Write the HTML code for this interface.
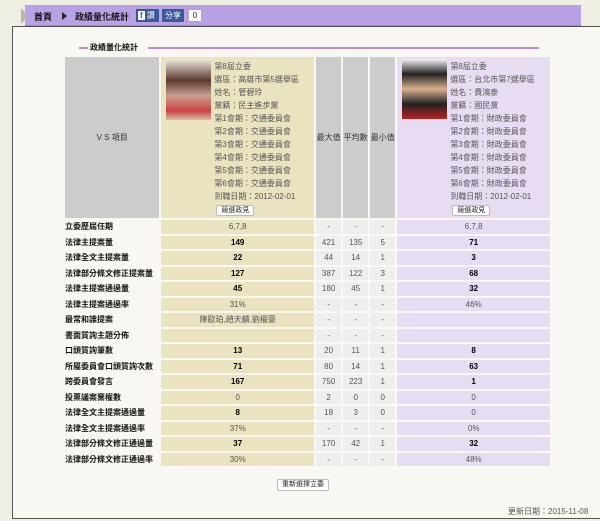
<!DOCTYPE html><html><head><meta charset="utf-8"><style>
*{margin:0;padding:0;box-sizing:border-box}
body{width:600px;height:521px;background:#efeee3;font-family:"Liberation Sans","Noto Sans CJK TC",sans-serif;font-size:8px;color:#222;position:relative;overflow:hidden}
.abs{position:absolute}
#bar{left:25px;top:5px;width:556px;height:21px;background:#b9a1e6;border-bottom:1px solid #9a85c8}
#box{left:12px;top:26px;width:600px;height:493px;background:#f8f7f1;border:1px solid #555}
.bc{font-weight:bold;font-size:9px;color:#111;top:10px}
table{position:absolute;left:63px;top:55px;border-collapse:separate;border-spacing:2px 2px;width:489px}
td{height:13.5px;text-align:center;font-size:8px;color:#555;padding:0}
td.l{text-align:left;font-weight:bold;color:#111;background:#f8f7f1;width:94px}
td.a{background:#e9e3c0;width:152px}
td.b{background:#e8dcf2;width:152px}
td.m{background:#eeeeec;width:25px;color:#555}
b{color:#000}
.hd td{height:161px;vertical-align:middle}
.info{position:absolute;left:53px;top:3px;text-align:left;line-height:13px;color:#555;font-size:8px}
.btn{display:inline-block;background:#fff;border:1px solid #bbb;border-radius:2px;font-size:7px;padding:0 4px;line-height:9px;color:#222;margin-left:2px}
</style></head><body>
<div id="bar" class="abs"></div>
<div class="abs" style="left:21px;top:8px;width:0;height:0;border-left:8px solid #b8b8b0;border-top:8px solid transparent;border-bottom:8px solid transparent"></div>
<div class="abs bc" style="left:34px;top:10px">首頁</div>
<div class="abs" style="left:62px;top:12px;border-left:5px solid #222;border-top:4px solid transparent;border-bottom:4px solid transparent"></div>
<div class="abs bc" style="left:75px;top:10px">政績量化統計</div>
<div class="abs" style="left:136px;top:9px;width:23px;height:13px;background:#3b5998;color:#fff;font-size:8px;line-height:13px;padding-left:2px"><span style="background:#fff;color:#3b5998;font-weight:bold;padding:0 2px">f</span> 讚</div>
<div class="abs" style="left:162px;top:9px;width:22px;height:13px;background:#3b5998;color:#fff;font-size:8px;line-height:13px;text-align:center">分享</div>
<div class="abs" style="left:188px;top:9px;width:14px;height:13px;background:#fff;border:1px solid #aaa;font-size:8px;line-height:11px;text-align:center">0</div>
<div id="box" class="abs"></div>
<div class="abs" style="left:79px;top:47px;width:9px;height:2px;background:#b98ed0"></div>
<div class="abs" style="left:90px;top:42px;font-weight:bold;font-size:8px;color:#111">政績量化統計</div>
<div class="abs" style="left:148px;top:47px;width:391px;height:2px;background:#b98ed0"></div>
<table>
<tr class="hd"><td style="background:#cccccc;color:#333;width:94px">V S 項目</td>
<td class="a" style="position:relative"><div class="abs" style="left:5px;top:2px;width:45px;height:61px;background:linear-gradient(#efe9e0 0,#5a3a30 35%,#c9a090 60%,#c44 85%,#d8c0a8 100%)"></div><div class="info">第8屆立委<br>選區：高雄市第5選舉區<br>姓名：管碧玲<br>黨籍：民主進步黨<br>第1會期：交通委員會<br>第2會期：交通委員會<br>第3會期：交通委員會<br>第4會期：交通委員會<br>第5會期：交通委員會<br>第6會期：交通委員會<br>到職日期：2012-02-01<br><span class="btn">競選政見</span></div></td>
<td style="background:#cccccc;color:#333;width:25px">最大值</td><td style="background:#cccccc;color:#333;width:25px">平均數</td><td style="background:#cccccc;color:#333;width:25px">最小值</td>
<td class="b" style="position:relative"><div class="abs" style="left:5px;top:2px;width:45px;height:60px;background:linear-gradient(#f4f4f4 0,#222 25%,#d8b090 50%,#222 75%,#b22 100%)"></div><div class="info">第8屆立委<br>選區：台北市第7選舉區<br>姓名：費鴻泰<br>黨籍：國民黨<br>第1會期：財政委員會<br>第2會期：財政委員會<br>第3會期：財政委員會<br>第4會期：財政委員會<br>第5會期：財政委員會<br>第6會期：財政委員會<br>到職日期：2012-02-01<br><span class="btn">競選政見</span></div></td></tr>
<tr><td class="l">立委歷屆任期</td><td class="a">6,7,8</td><td class="m">-</td><td class="m">-</td><td class="m">-</td><td class="b">6,7,8</td></tr>
<tr><td class="l">法律主提案量</td><td class="a"><b>149</b></td><td class="m">421</td><td class="m">135</td><td class="m">5</td><td class="b"><b>71</b></td></tr>
<tr><td class="l">法律全文主提案量</td><td class="a"><b>22</b></td><td class="m">44</td><td class="m">14</td><td class="m">1</td><td class="b"><b>3</b></td></tr>
<tr><td class="l">法律部分條文修正提案量</td><td class="a"><b>127</b></td><td class="m">387</td><td class="m">122</td><td class="m">3</td><td class="b"><b>68</b></td></tr>
<tr><td class="l">法律主提案通過量</td><td class="a"><b>45</b></td><td class="m">180</td><td class="m">45</td><td class="m">1</td><td class="b"><b>32</b></td></tr>
<tr><td class="l">法律主提案通過率</td><td class="a">31%</td><td class="m">-</td><td class="m">-</td><td class="m">-</td><td class="b">46%</td></tr>
<tr><td class="l">最常和誰提案</td><td class="a">陳歐珀,趙天麟,劉櫂豪</td><td class="m">-</td><td class="m">-</td><td class="m">-</td><td class="b"></td></tr>
<tr><td class="l">書面質詢主題分佈</td><td class="a"></td><td class="m">-</td><td class="m">-</td><td class="m">-</td><td class="b"></td></tr>
<tr><td class="l">口頭質詢筆數</td><td class="a"><b>13</b></td><td class="m">20</td><td class="m">11</td><td class="m">1</td><td class="b"><b>8</b></td></tr>
<tr><td class="l">所屬委員會口頭質詢次數</td><td class="a"><b>71</b></td><td class="m">80</td><td class="m">14</td><td class="m">1</td><td class="b"><b>63</b></td></tr>
<tr><td class="l">跨委員會發言</td><td class="a"><b>167</b></td><td class="m">750</td><td class="m">223</td><td class="m">1</td><td class="b"><b>1</b></td></tr>
<tr><td class="l">投票議案棄權數</td><td class="a">0</td><td class="m">2</td><td class="m">0</td><td class="m">0</td><td class="b">0</td></tr>
<tr><td class="l">法律全文主提案通過量</td><td class="a"><b>8</b></td><td class="m">18</td><td class="m">3</td><td class="m">0</td><td class="b">0</td></tr>
<tr><td class="l">法律全文主提案通過率</td><td class="a">37%</td><td class="m">-</td><td class="m">-</td><td class="m">-</td><td class="b">0%</td></tr>
<tr><td class="l">法律部分條文修正通過量</td><td class="a"><b>37</b></td><td class="m">170</td><td class="m">42</td><td class="m">1</td><td class="b"><b>32</b></td></tr>
<tr><td class="l">法律部分條文修正通過率</td><td class="a">30%</td><td class="m">-</td><td class="m">-</td><td class="m">-</td><td class="b">48%</td></tr>
</table>
<div class="abs" style="left:277px;top:479px;width:52px;height:12px;background:#fff;border:1px solid #bbb;border-radius:2px;font-size:7px;line-height:10px;text-align:center;color:#222">重新選擇立委</div>
<div class="abs" style="left:508px;top:506px;font-size:8px;color:#555">更新日期：2015-11-08</div>
</body></html>
